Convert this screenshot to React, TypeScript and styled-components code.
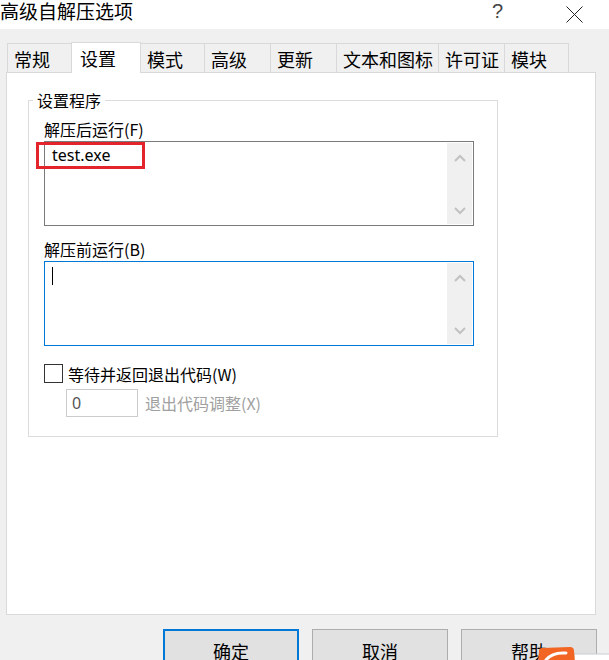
import React from "react";
import styled, { createGlobalStyle } from "styled-components";

const GlobalStyle = createGlobalStyle`
  html, body {
    margin: 0;
    padding: 0;
    background: #f0f0f0;
  }
  * {
    box-sizing: border-box;
  }
`;

const CJK = `"Noto Sans CJK SC", "Noto Sans", sans-serif`;
const LATIN = `"Noto Sans", "Noto Sans CJK SC", sans-serif`;

const Window = styled.div`
  position: relative;
  width: 609px;
  height: 660px;
  overflow: hidden;
  background: #f0f0f0;
  font-family: ${CJK};
  color: #000;
`;

const TitleBar = styled.div`
  height: 29px;
  background: #fff;
  display: flex;
  align-items: flex-start;
`;

const Title = styled.div`
  flex: 1;
  font-size: 19px;
  line-height: 22px;
`;

const HelpGlyph = styled.div`
  width: 20px;
  font-family: "Liberation Sans", sans-serif;
  font-size: 20px;
  line-height: 22px;
  color: #444;
  margin-right: 54px;
`;

const CloseBox = styled.div`
  width: 17px;
  height: 17px;
  margin-right: 26px;
  margin-top: 4px;
`;

const Body = styled.div`
  padding: 13px 13px 0 6px;
`;

const TabStrip = styled.div`
  display: flex;
  align-items: flex-end;
  height: 30px;
  padding-left: 2px;
`;

const Tab = styled.div<{ $w: number; $active?: boolean }>`
  width: ${(p) => p.$w}px;
  height: ${(p) => (p.$active ? 31 : 29)}px;
  margin-bottom: ${(p) => (p.$active ? -1 : 0)}px;
  background: ${(p) => (p.$active ? "#fff" : "#f0f0f0")};
  border: 1px solid #d9d9d9;
  border-bottom: none;
  margin-left: -1px;
  position: ${(p) => (p.$active ? "relative" : "static")};
  z-index: ${(p) => (p.$active ? 1 : 0)};
  display: flex;
  align-items: center;
  padding-left: ${(p) => (p.$active ? 8 : 6)}px;
  padding-top: ${(p) => (p.$active ? 0 : 1)}px;
  font-size: 18px;
  white-space: nowrap;
`;

const Panel = styled.div`
  width: 590px;
  height: 543px;
  background: #fff;
  border: 1px solid #d9d9d9;
  padding: 19px 0 0 21px;
`;

const Group = styled.fieldset`
  width: 470px;
  margin: 0;
  border: 1px solid #dcdcdc;
  padding: 0 23px 19px 15px;
`;

const Legend = styled.legend`
  font-size: 16px;
  line-height: 16px;
  padding: 0 4px;
  margin-left: -11px;
`;

const FieldLabel = styled.div<{ $top: number }>`
  font-size: 16px;
  line-height: 20px;
  margin-top: ${(p) => p.$top}px;
  margin-bottom: 2px;
  white-space: nowrap;
`;

const TextBox = styled.div<{ $focused?: boolean }>`
  position: relative;
  width: 430px;
  height: 85px;
  border: 1px solid ${(p) => (p.$focused ? "#0078d7" : "#7a7a7a")};
  padding: 1px;
  display: flex;
  background: #fff;
`;

const TextContent = styled.div`
  flex: 1;
  padding: 2px 6px;
  font-family: ${LATIN};
  font-size: 16px;
  line-height: 20px;
`;

const Caret = styled.span`
  display: block;
  width: 1px;
  height: 18px;
  margin-top: 2px;
  background: #000;
`;

const ScrollBar = styled.div`
  width: 25px;
  background: #f0f0f0;
  display: flex;
  flex-direction: column;
  justify-content: space-between;
  align-items: center;
  padding: 11px 0 9px;
`;

const Highlight = styled.div`
  position: absolute;
  left: -9px;
  top: 0;
  width: 109px;
  height: 27px;
  border: 3px solid #e3242b;
  pointer-events: none;
`;

const CheckRow = styled.label`
  display: flex;
  align-items: center;
  gap: 5px;
  margin-top: 17px;
  height: 21px;
  font-size: 16px;
  white-space: nowrap;
`;

const CheckBox = styled.span`
  width: 19px;
  height: 19px;
  border: 1px solid #333;
  background: #fff;
`;

const NumRow = styled.div`
  display: flex;
  align-items: center;
  gap: 7px;
  margin-top: 5px;
  padding-left: 22px;
`;

const NumInput = styled.div`
  width: 72px;
  height: 28px;
  border: 1px solid #cccccc;
  padding: 3px 5px;
  font-family: ${LATIN};
  font-size: 16px;
  line-height: 20px;
  color: #555;
`;

const DimLabel = styled.span`
  font-size: 16px;
  color: #a0a0a0;
  white-space: nowrap;
`;

const ButtonRow = styled.div`
  display: flex;
  justify-content: flex-end;
  gap: 13px;
  margin-top: 14px;
  margin-right: -1px;
`;

const Button = styled.div<{ $primary?: boolean }>`
  width: 136px;
  height: 42px;
  background: #e1e1e1;
  border: ${(p) => (p.$primary ? "2px solid #0078d7" : "1px solid #adadad")};
  display: flex;
  align-items: center;
  justify-content: center;
  padding-top: 1px;
  font-size: 18px;
`;

const Tray = styled.div`
  position: absolute;
  left: 536px;
  top: 644px;
  width: 73px;
  height: 16px;
`;

const tabs = [
  { label: "常规", w: 65 },
  { label: "设置", w: 70, active: true },
  { label: "模式", w: 65 },
  { label: "高级", w: 67 },
  { label: "更新", w: 67 },
  { label: "文本和图标", w: 103 },
  { label: "许可证", w: 67 },
  { label: "模块", w: 65 },
];

const Chevron = ({ up }: { up?: boolean }) => (
  <svg width="12" height="8" viewBox="0 0 12 8">
    <path
      d={up ? "M1 7 L6 2 L11 7" : "M1 1 L6 6 L11 1"}
      fill="none"
      stroke="#c2c2c2"
      strokeWidth="2"
    />
  </svg>
);

export default function App() {
  return (
    <Window>
      <GlobalStyle />
      <TitleBar>
        <Title>高级自解压选项</Title>
        <HelpGlyph>?</HelpGlyph>
        <CloseBox>
          <svg width="17" height="17" viewBox="0 0 17 17">
            <path d="M0.5 0.5 L16.5 16.5 M16.5 0.5 L0.5 16.5" stroke="#222" strokeWidth="1" />
          </svg>
        </CloseBox>
      </TitleBar>
      <Body>
        <TabStrip>
          {tabs.map((t) => (
            <Tab key={t.label} $w={t.w} $active={t.active}>
              {t.label}
            </Tab>
          ))}
        </TabStrip>
        <Panel>
          <Group>
            <Legend>设置程序</Legend>
            <FieldLabel $top={11}>解压后运行(F)</FieldLabel>
            <TextBox>
              <TextContent>test.exe</TextContent>
              <ScrollBar>
                <Chevron up />
                <Chevron />
              </ScrollBar>
              <Highlight />
            </TextBox>
            <FieldLabel $top={13}>解压前运行(B)</FieldLabel>
            <TextBox $focused>
              <TextContent>
                <Caret />
              </TextContent>
              <ScrollBar>
                <Chevron up />
                <Chevron />
              </ScrollBar>
            </TextBox>
            <CheckRow>
              <CheckBox />
              等待并返回退出代码(W)
            </CheckRow>
            <NumRow>
              <NumInput>0</NumInput>
              <DimLabel>退出代码调整(X)</DimLabel>
            </NumRow>
          </Group>
        </Panel>
        <ButtonRow>
          <Button $primary>确定</Button>
          <Button>取消</Button>
          <Button>帮助</Button>
        </ButtonRow>
      </Body>
      <Tray>
        <svg width="73" height="16" viewBox="0 0 73 16">
          <rect x="38" y="7" width="36" height="12" fill="#fff" stroke="#c8ccd4" />
          <path d="M3 4 Q3 1 6 1 L34 0 Q38 0 38 4 L39 16 L2 16 Z" fill="#f26522" />
          <path d="M10 13 Q16 5 30 6" fill="none" stroke="#fff" strokeWidth="3" strokeLinecap="round" />
        </svg>
      </Tray>
    </Window>
  );
}
